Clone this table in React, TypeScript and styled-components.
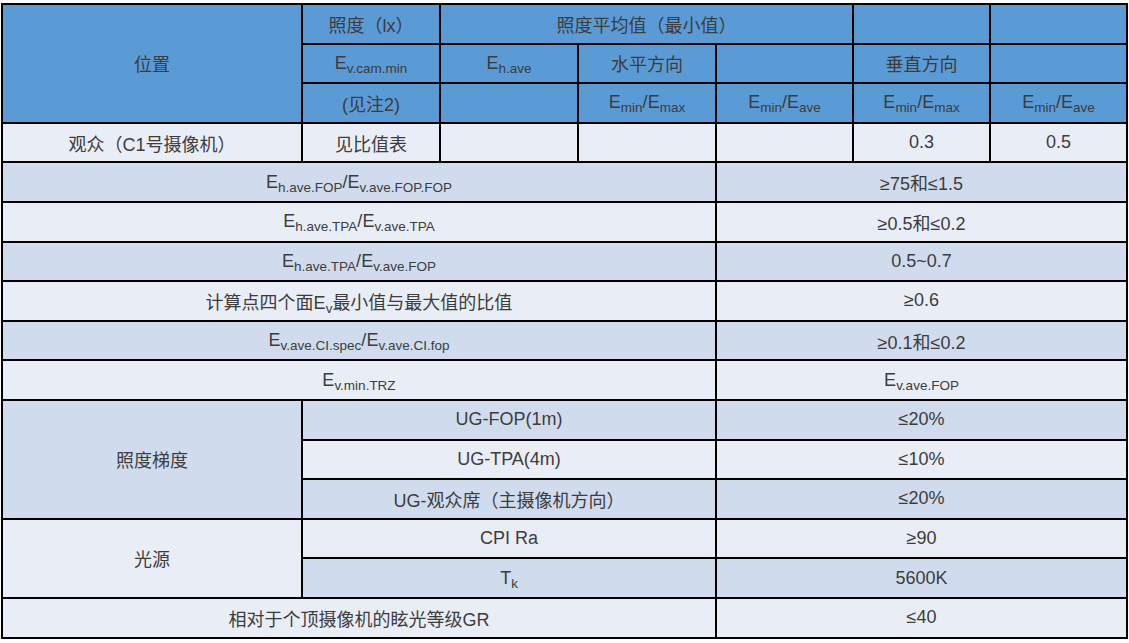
import styled, { createGlobalStyle } from 'styled-components';
import type { ReactNode } from 'react';

type Tone = 'head' | 'dark' | 'light';

const tones: Record<Tone, string> = {
  head: '#5b9bd5',
  dark: '#d0dcee',
  light: '#e9eef6',
};

const GlobalStyle = createGlobalStyle`
  body {
    margin: 0;
    background: #ffffff;
    font-family: "Liberation Sans", "Noto Sans CJK SC", sans-serif;
  }
`;

const Sheet = styled.table`
  margin: 3px 0 0 1px;
  width: 1127px;
  table-layout: fixed;
  border-collapse: separate;
  border-spacing: 0;
  border-top: 2px solid #000;
  border-left: 2px solid #000;
  color: #3c3c3c;
  font-size: 18px;
`;

const Cell = styled.td<{ $tone: Tone }>`
  box-sizing: border-box;
  height: 39.6px;
  padding: 0;
  border-right: 2px solid #000;
  border-bottom: 2px solid #000;
  background: ${p => tones[p.$tone]};
  text-align: center;
  vertical-align: middle;
  white-space: nowrap;
`;

const Sub = styled.sub`
  font-size: 0.75em;
  vertical-align: -0.3em;
  line-height: 0;
`;

const E = ({ s }: { s: string }) => (
  <>
    E<Sub>{s}</Sub>
  </>
);

type Ratio = { label: ReactNode; value: ReactNode; tone: Tone };

const ratios: Ratio[] = [
  { label: <><E s="h.ave.FOP" />/<E s="v.ave.FOP.FOP" /></>, value: '≥75和≤1.5', tone: 'dark' },
  { label: <><E s="h.ave.TPA" />/<E s="v.ave.TPA" /></>, value: '≥0.5和≤0.2', tone: 'light' },
  { label: <><E s="h.ave.TPA" />/<E s="v.ave.FOP" /></>, value: '0.5~0.7', tone: 'dark' },
  { label: <>计算点四个面<E s="v" />最小值与最大值的比值</>, value: '≥0.6', tone: 'light' },
  { label: <><E s="v.ave.CI.spec" />/<E s="v.ave.CI.fop" /></>, value: '≥0.1和≤0.2', tone: 'dark' },
  { label: <E s="v.min.TRZ" />, value: <E s="v.ave.FOP" />, tone: 'light' },
];

const gradients: Ratio[] = [
  { label: 'UG-FOP(1m)', value: '≤20%', tone: 'dark' },
  { label: 'UG-TPA(4m)', value: '≤10%', tone: 'light' },
  { label: 'UG-观众席（主摄像机方向）', value: '≤20%', tone: 'dark' },
];

const sources: Ratio[] = [
  { label: 'CPI Ra', value: '≥90', tone: 'light' },
  { label: <>T<Sub>k</Sub></>, value: '5600K', tone: 'dark' },
];

const widths = [300, 138, 138, 138, 137, 137, 137];

export default function App() {
  return (
    <>
      <GlobalStyle />
      <Sheet>
        <colgroup>
          {widths.map((w, i) => (
            <col key={i} style={{ width: w }} />
          ))}
        </colgroup>
        <tbody>
          <tr>
            <Cell $tone="head" rowSpan={3}>位置</Cell>
            <Cell $tone="head">照度（lx）</Cell>
            <Cell $tone="head" colSpan={3}>照度平均值（最小值）</Cell>
            <Cell $tone="head" />
            <Cell $tone="head" />
          </tr>
          <tr>
            <Cell $tone="head"><E s="v.cam.min" /></Cell>
            <Cell $tone="head"><E s="h.ave" /></Cell>
            <Cell $tone="head">水平方向</Cell>
            <Cell $tone="head" />
            <Cell $tone="head">垂直方向</Cell>
            <Cell $tone="head" />
          </tr>
          <tr>
            <Cell $tone="head">(见注2)</Cell>
            <Cell $tone="head" />
            <Cell $tone="head"><E s="min" />/<E s="max" /></Cell>
            <Cell $tone="head"><E s="min" />/<E s="ave" /></Cell>
            <Cell $tone="head"><E s="min" />/<E s="max" /></Cell>
            <Cell $tone="head"><E s="min" />/<E s="ave" /></Cell>
          </tr>
          <tr>
            <Cell $tone="light">观众（C1号摄像机）</Cell>
            <Cell $tone="light">见比值表</Cell>
            <Cell $tone="light" />
            <Cell $tone="light" />
            <Cell $tone="light" />
            <Cell $tone="light">0.3</Cell>
            <Cell $tone="light">0.5</Cell>
          </tr>
          {ratios.map((r, i) => (
            <tr key={i}>
              <Cell $tone={r.tone} colSpan={4}>{r.label}</Cell>
              <Cell $tone={r.tone} colSpan={3}>{r.value}</Cell>
            </tr>
          ))}
          {gradients.map((r, i) => (
            <tr key={i}>
              {i === 0 && <Cell $tone="dark" rowSpan={3}>照度梯度</Cell>}
              <Cell $tone={r.tone} colSpan={3}>{r.label}</Cell>
              <Cell $tone={r.tone} colSpan={3}>{r.value}</Cell>
            </tr>
          ))}
          {sources.map((r, i) => (
            <tr key={i}>
              {i === 0 && <Cell $tone="light" rowSpan={2}>光源</Cell>}
              <Cell $tone={r.tone} colSpan={3}>{r.label}</Cell>
              <Cell $tone={r.tone} colSpan={3}>{r.value}</Cell>
            </tr>
          ))}
          <tr>
            <Cell $tone="light" colSpan={4}>相对于个顶摄像机的眩光等级GR</Cell>
            <Cell $tone="light" colSpan={3}>≤40</Cell>
          </tr>
        </tbody>
      </Sheet>
    </>
  );
}
